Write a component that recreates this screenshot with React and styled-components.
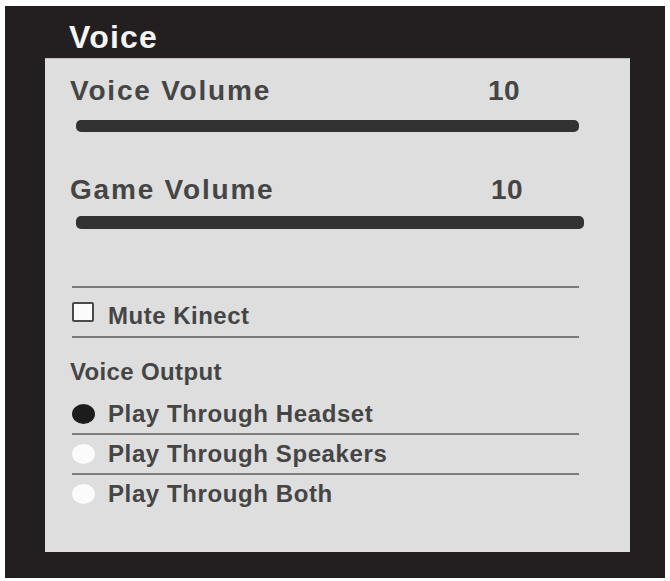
import React from 'react';
import styled, { createGlobalStyle } from 'styled-components';

const GlobalStyle = createGlobalStyle`
	body {
		margin: 0;
		background: #ffffff;
		font-family: 'Liberation Sans', Arial, sans-serif;
	}
`;

const volumes = [
	{ label: 'Voice Volume', value: 10, valueAt: 418, barWidth: 503, barHeight: 12, gap: 15 },
	{ label: 'Game Volume', value: 10, valueAt: 421, barWidth: 508, barHeight: 13, gap: 12 },
];

const outputs = [
	{ label: 'Play Through Headset', checked: true },
	{ label: 'Play Through Speakers', checked: false },
	{ label: 'Play Through Both', checked: false },
];

const App = () => {
	return (
		<>
			<GlobalStyle />
			<Frame>
				<Title>Voice</Title>
				<Panel>
					{volumes.map((v, i) => (
						<VolumeBlock key={v.label} first={i === 0}>
							<VolumeRow valueAt={v.valueAt}>
								<VolumeLabel>{v.label}</VolumeLabel>
								<span>{v.value}</span>
							</VolumeRow>
							<Bar
								gap={v.gap}
								style={{ width: v.barWidth, height: v.barHeight }}
							/>
						</VolumeBlock>
					))}

					<MuteRow>
						<CheckBox />
						<MuteLabel>Mute Kinect</MuteLabel>
					</MuteRow>

					<SectionLabel>Voice Output</SectionLabel>
					<OptionList>
						{outputs.map((o) => (
							<OptionRow key={o.label}>
								<Radio checked={o.checked} />
								<OptionLabel>{o.label}</OptionLabel>
							</OptionRow>
						))}
					</OptionList>
				</Panel>
			</Frame>
		</>
	);
};

const Frame = styled.div`
	box-sizing: border-box;
	margin: 6px 0 0 5px;
	width: 660px;
	height: 572px;
	background: #231f20;
	padding: 15px 35px 26px 40px;
	display: flex;
	flex-direction: column;
`;

const Title = styled.h1`
	margin: 0 0 5px 24px;
	font-size: 32px;
	line-height: 32px;
	font-weight: bold;
	letter-spacing: 1.2px;
	color: #f4f4f4;
`;

const Panel = styled.div`
	flex: 1;
	background: #dedede;
	box-shadow: inset 0 1px 0 #bdbdbd;
	padding: 19px 0 0 25px;
	display: flex;
	flex-direction: column;
	color: #454545;
`;

const VolumeBlock = styled.div`
	margin-top: ${({ first }) => (first ? '0' : '44px')};
	display: flex;
	flex-direction: column;
`;

const VolumeRow = styled.div`
	display: grid;
	grid-template-columns: ${({ valueAt }) => valueAt}px auto;
	font-size: 28px;
	line-height: 28px;
	font-weight: bold;
	letter-spacing: 0.5px;
`;

const VolumeLabel = styled.span`
	letter-spacing: 1.8px;
`;

const Bar = styled.div`
	margin: ${({ gap }) => gap}px 0 0 6px;
	background: #323232;
	border-radius: 5px;
`;

const MuteRow = styled.div`
	margin: 57px 0 0 2px;
	width: 507px;
	height: 48px;
	border-top: 2px solid #7b7b7b;
	border-bottom: 2px solid #7b7b7b;
	display: flex;
	align-items: center;
	column-gap: 14px;
`;

const CheckBox = styled.span`
	box-sizing: border-box;
	width: 22px;
	height: 20px;
	background: #fbfbfb;
	border: 2px solid #4a4a4a;
	border-radius: 2px;
`;

const MuteLabel = styled.span`
	margin-top: 7px;
	font-size: 24px;
	line-height: 24px;
	font-weight: bold;
	letter-spacing: 0.5px;
`;

const SectionLabel = styled.div`
	margin-top: 22px;
	font-size: 24px;
	line-height: 24px;
	font-weight: bold;
	letter-spacing: 0.35px;
`;

const OptionList = styled.div`
	margin: 11px 0 0 2px;
	width: 507px;
	display: flex;
	flex-direction: column;
`;

const OptionRow = styled.div`
	height: 38px;
	display: flex;
	align-items: center;
	column-gap: 13px;
	border-bottom: 2px solid #7b7b7b;
	&:last-child {
		border-bottom: none;
	}
`;

const Radio = styled.span`
	width: 23px;
	height: 20px;
	border-radius: 50%;
	background: ${({ checked }) => (checked ? '#1c1c1c' : '#fbfbfb')};
`;

const OptionLabel = styled.span`
	font-size: 24px;
	line-height: 24px;
	font-weight: bold;
	letter-spacing: 0.6px;
`;

export default App;
